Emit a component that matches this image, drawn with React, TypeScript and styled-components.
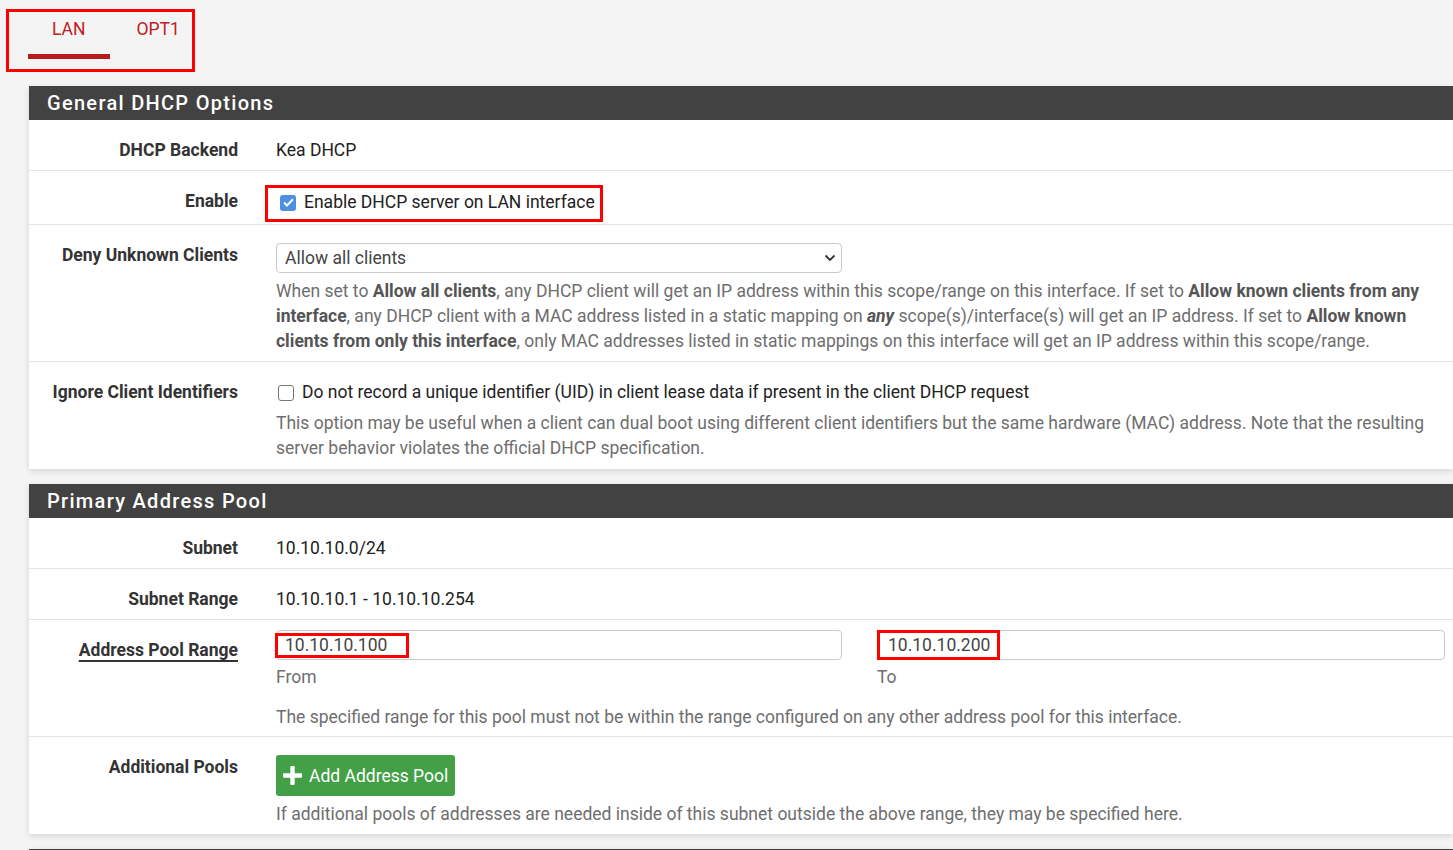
import styled, { createGlobalStyle } from 'styled-components'

const GlobalStyle = createGlobalStyle`
  html, body {
    margin: 0;
    padding: 0;
    background: #f4f4f4;
    font-family: Roboto, 'Liberation Sans', sans-serif;
    color: #222;
    overflow: hidden;
  }
`

const Page = styled.div`
  padding-top: 9px;
  width: 1453px;
`

const TabBox = styled.div`
  box-sizing: border-box;
  margin-left: 6px;
  width: 189px;
  height: 63px;
  border: 3px solid #f00;
  padding-left: 19px;
  display: flex;
  align-items: flex-start;
`

const Tab = styled.div<{ $active?: boolean }>`
  padding: 5px 24px 0;
  height: 37px;
  font-size: 17.5px;
  line-height: 25px;
  color: #c02020;
  border-bottom: 5px solid ${(p) => (p.$active ? '#b71c1c' : 'transparent')};
  margin-right: 3px;
`

const Panel = styled.section`
  margin: 14px 0 15px 29px;
  background: #fff;
  box-shadow: 0 2px 6px rgba(0, 0, 0, 0.13);
`

const PanelHeader = styled.h2`
  margin: 0;
  height: 34px;
  background: #424242;
  color: #fff;
  font-size: 20px;
  font-weight: 500;
  letter-spacing: 1.3px;
  line-height: 34px;
  padding-left: 18px;
`

const Row = styled.div<{ $top?: number; $bottom?: number }>`
  display: grid;
  grid-template-columns: 224px 1fr;
  padding: ${(p) => p.$top ?? 18}px 0 ${(p) => p.$bottom ?? 7}px;
  border-bottom: 1px solid #e4e4e4;
  &:last-child {
    border-bottom: none;
  }
`

const Label = styled.div<{ $pad?: number; $abbr?: boolean }>`
  text-align: right;
  padding-right: 15px;
  padding-top: ${(p) => p.$pad ?? 0}px;
  font-weight: 700;
  font-size: 17.5px;
  line-height: 25px;
  color: #333;
  span {
    text-decoration: ${(p) => (p.$abbr ? 'underline' : 'none')};
    text-underline-offset: 4px;
    text-decoration-thickness: 1.5px;
  }
`

const Value = styled.div`
  padding: 0 8px 0 23px;
  font-size: 17.5px;
  line-height: 25px;
  color: #222;
  min-width: 0;
`

const Help = styled.div<{ $mt?: number }>`
  margin-top: ${(p) => p.$mt ?? 6}px;
  font-size: 17.5px;
  line-height: 25px;
  color: #6e6e6e;
  b {
    color: #555;
  }
`

const Highlight = styled.div`
  display: inline-flex;
  align-items: center;
  margin: -7px 0 -5px -11px;
  padding: 2px 5px 4px 10px;
  border: 3px solid #f00;
`

const CheckRow = styled.label`
  display: flex;
  align-items: center;
  gap: 8px;
  padding-left: 2px;
`

const Box = styled.span<{ $checked?: boolean }>`
  box-sizing: border-box;
  width: 16px;
  height: 16px;
  border-radius: 3px;
  flex: none;
  display: inline-flex;
  align-items: center;
  justify-content: center;
  background: ${(p) => (p.$checked ? '#4a8fe2' : '#fff')};
  border: ${(p) => (p.$checked ? 'none' : '1px solid #777')};
`

const Select = styled.div`
  box-sizing: border-box;
  width: 566px;
  height: 30px;
  border: 1px solid #ccc;
  border-radius: 4px;
  display: flex;
  align-items: center;
  justify-content: space-between;
  padding: 0 5px 0 8px;
  color: #444;
`

const Pair = styled.div`
  display: grid;
  grid-template-columns: 566px 568px;
  column-gap: 35px;
`

const Field = styled.div`
  box-sizing: border-box;
  height: 30px;
  border: 1px solid #ccc;
  border-radius: 4px;
  display: flex;
  align-items: center;
  color: #444;
`

const Mark = styled.span<{ $h: number; $l: number; $r: number; $ml: number }>`
  box-sizing: border-box;
  height: ${(p) => p.$h}px;
  display: inline-flex;
  align-items: center;
  margin-left: ${(p) => p.$ml}px;
  padding: 0 ${(p) => p.$r}px 0 ${(p) => p.$l}px;
  border: 3px solid #f00;
`

const Caption = styled.div`
  margin-top: 5px;
  font-size: 17.5px;
  line-height: 25px;
  color: #6e6e6e;
`

const Button = styled.button`
  box-sizing: border-box;
  height: 41px;
  padding: 0 7px 0 7px;
  display: inline-flex;
  align-items: center;
  gap: 7px;
  background: #43a047;
  border: none;
  border-radius: 3px;
  color: #fff;
  font-family: inherit;
  font-size: 17.5px;
`

const Check = () => (
  <svg width="11" height="9" viewBox="0 0 11 9">
    <path d="M1 4.5 L4 7.5 L10 1.2" fill="none" stroke="#fff" strokeWidth="2" />
  </svg>
)

const Chevron = () => (
  <svg width="12" height="8" viewBox="0 0 12 8">
    <path d="M1.5 1.5 L6 6 L10.5 1.5" fill="none" stroke="#333" strokeWidth="1.8" />
  </svg>
)

const Plus = () => (
  <svg width="19" height="19" viewBox="0 0 19 19">
    <rect x="7.3" y="0" width="4.4" height="19" rx="1" fill="#fff" />
    <rect x="0" y="7.3" width="19" height="4.4" rx="1" fill="#fff" />
  </svg>
)

export default function App() {
  return (
    <>
      <GlobalStyle />
      <Page>
        <TabBox>
          <Tab $active>LAN</Tab>
          <Tab>OPT1</Tab>
        </TabBox>

        <Panel>
          <PanelHeader>General DHCP Options</PanelHeader>
          <Row>
            <Label>DHCP Backend</Label>
            <Value>Kea DHCP</Value>
          </Row>
          <Row>
            <Label>Enable</Label>
            <Value>
              <Highlight>
                <CheckRow>
                  <Box $checked>
                    <Check />
                  </Box>
                  Enable DHCP server on LAN interface
                </CheckRow>
              </Highlight>
            </Value>
          </Row>
          <Row>
            <Label>Deny Unknown Clients</Label>
            <Value>
              <Select>
                Allow all clients
                <Chevron />
              </Select>
              <Help>
                When set to <b>Allow all clients</b>, any DHCP client will get an IP address within this
                scope/range on this interface. If set to <b>Allow known clients from any interface</b>, any
                DHCP client with a MAC address listed in a static mapping on{' '}
                <b>
                  <i>any</i>
                </b>{' '}
                scope(s)/interface(s) will get an IP address. If set to{' '}
                <b>Allow known clients from only this interface</b>, only MAC addresses listed in static
                mappings on this interface will get an IP address within this scope/range.
              </Help>
            </Value>
          </Row>
          <Row $bottom={8}>
            <Label>Ignore Client Identifiers</Label>
            <Value>
              <CheckRow>
                <Box />
                Do not record a unique identifier (UID) in client lease data if present in the client DHCP
                request
              </CheckRow>
              <Help>
                This option may be useful when a client can dual boot using different client identifiers
                but the same hardware (MAC) address. Note that the resulting server behavior violates the
                official DHCP specification.
              </Help>
            </Value>
          </Row>
        </Panel>

        <Panel>
          <PanelHeader>Primary Address Pool</PanelHeader>
          <Row>
            <Label>Subnet</Label>
            <Value>10.10.10.0/24</Value>
          </Row>
          <Row>
            <Label>Subnet Range</Label>
            <Value>10.10.10.1 - 10.10.10.254</Value>
          </Row>
          <Row $top={10} $bottom={6}>
            <Label $abbr $pad={8}>
              <span>Address Pool Range</span>
            </Label>
            <Value>
              <Pair>
                <div>
                  <Field>
                    <Mark $h={25} $ml={-2} $l={7} $r={19}>
                      10.10.10.100
                    </Mark>
                  </Field>
                  <Caption>From</Caption>
                </div>
                <div>
                  <Field>
                    <Mark $h={30} $ml={-1} $l={8} $r={7}>
                      10.10.10.200
                    </Mark>
                  </Field>
                  <Caption>To</Caption>
                </div>
              </Pair>
              <Help $mt={15}>
                The specified range for this pool must not be within the range configured on any other
                address pool for this interface.
              </Help>
            </Value>
          </Row>
          <Row $top={18} $bottom={7}>
            <Label $pad={0}>Additional Pools</Label>
            <Value>
              <Button>
                <Plus />
                Add Address Pool
              </Button>
              <Help $mt={6}>
                If additional pools of addresses are needed inside of this subnet outside the above range,
                they may be specified here.
              </Help>
            </Value>
          </Row>
        </Panel>

        <Panel>
          <PanelHeader>Server Options</PanelHeader>
        </Panel>
      </Page>
    </>
  )
}
